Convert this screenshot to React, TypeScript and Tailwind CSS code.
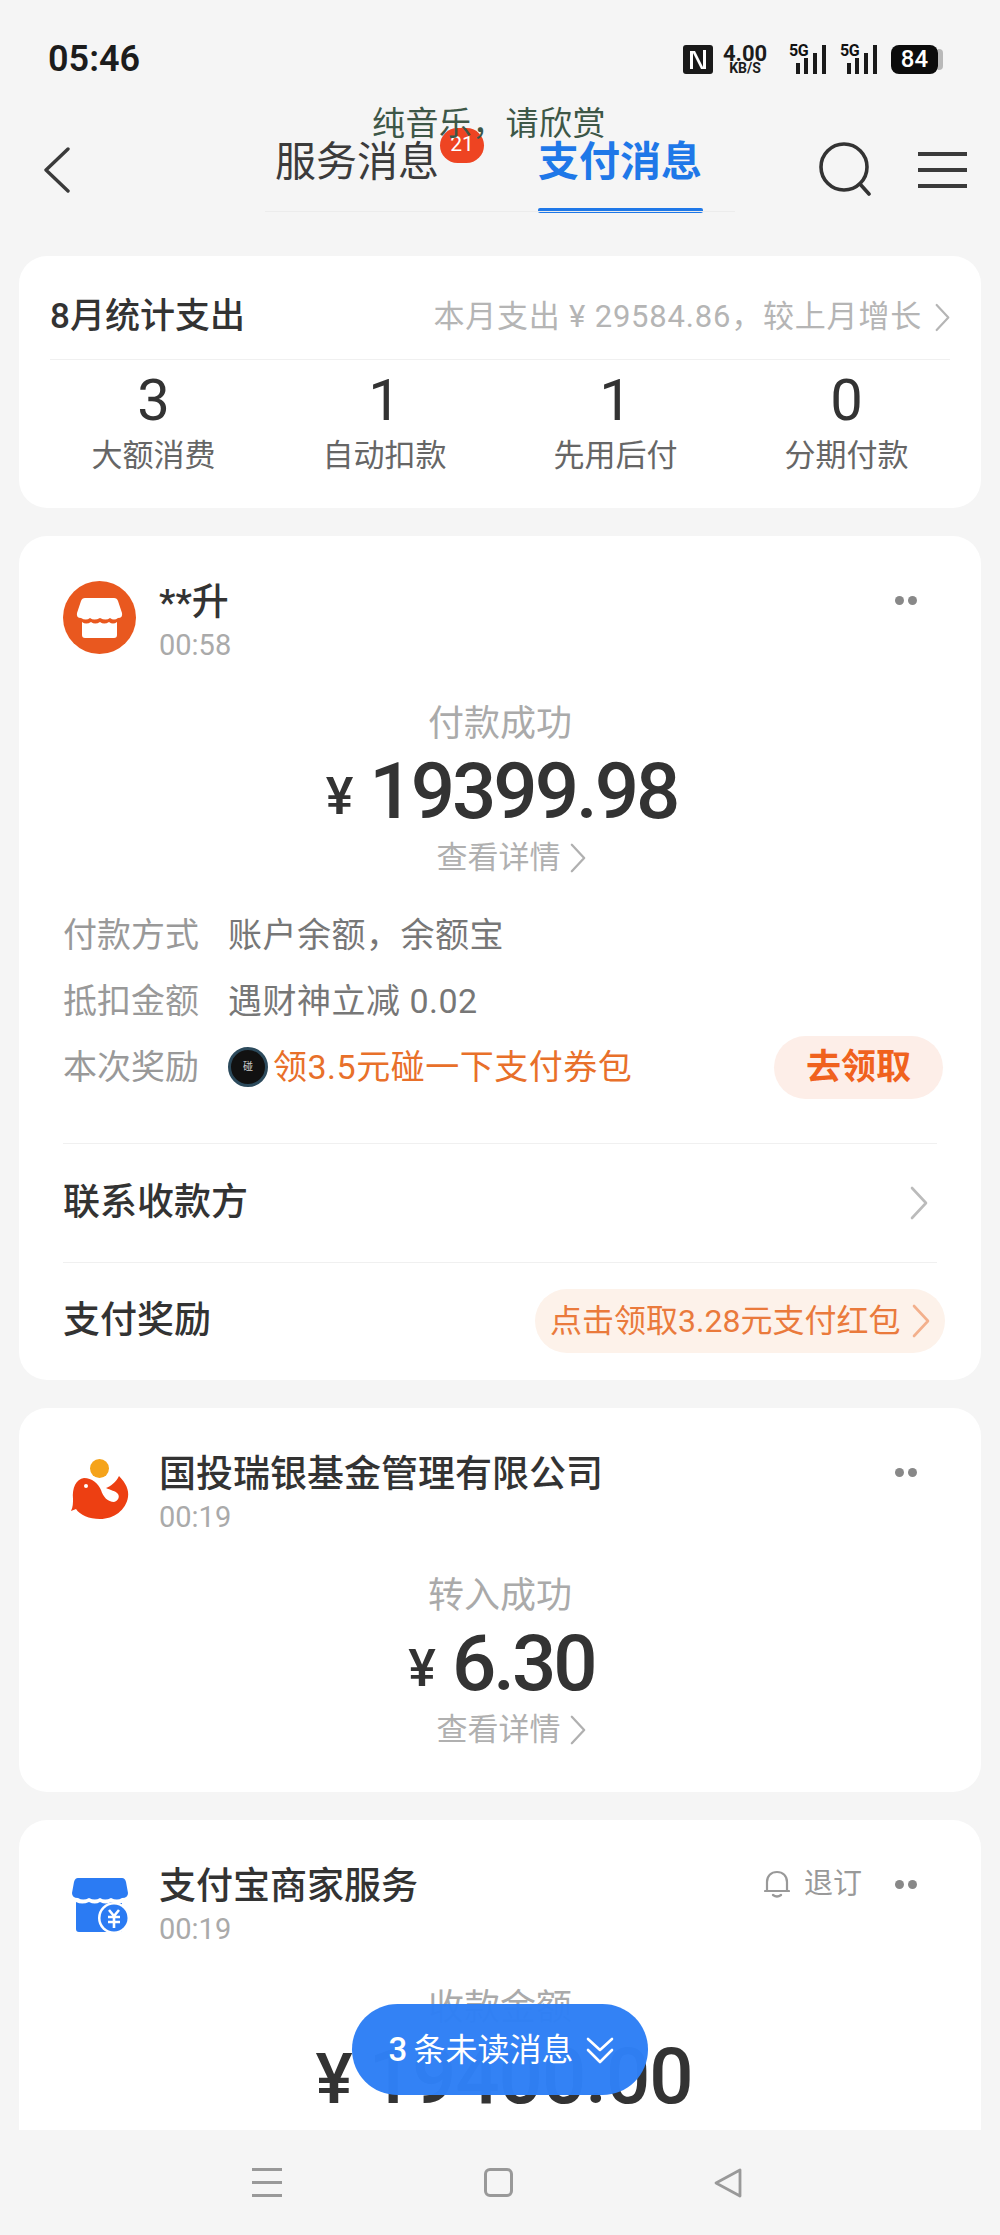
import React from 'react';

function Chevron({ className }: { className: string }) {
  return (
    <svg viewBox="0 0 18 34" fill="none" stroke="currentColor" strokeWidth="2.6" strokeLinecap="round" strokeLinejoin="round" className={className}>
      <path d="M2 2 L16 17 L2 32" />
    </svg>
  );
}

function Signal() {
  return (
    <div className="relative w-[38px] h-[29px]">
      <span className="absolute left-0 top-[-3px] text-[16px] leading-[18px] font-bold tracking-[-0.5px] text-[#111]">5G</span>
      <svg viewBox="0 0 38 29" className="absolute inset-0 w-[38px] h-[29px]" fill="#1a1a1a">
        <rect x="7" y="18" width="4" height="11" />
        <rect x="15" y="13" width="4" height="16" />
        <rect x="24" y="8" width="4" height="21" />
        <rect x="33" y="0" width="4" height="29" />
      </svg>
    </div>
  );
}

function StatusBar() {
  return (
    <div className="h-[100px] shrink-0 flex items-start justify-between pt-[41px] pl-[48px] pr-[57px]">
      <span className="text-[36px] leading-[36px] font-semibold text-[#1c1c1c]">05:46</span>
      <div className="mt-[4px] flex items-center">
        <svg viewBox="0 0 30 29" className="w-[30px] h-[29px]">
          <rect width="30" height="29" rx="3" fill="#1a1a1a" />
          <path d="M7 24 V6 H12 L20 22 V5 H23 V24 H18 L10 8 V24 Z" fill="#fff" />
        </svg>
        <div className="ml-[8px] w-[48px] flex flex-col items-center text-[#1c1c1c] font-bold">
          <span className="text-[22px] leading-[18px]">4.00</span>
          <span className="text-[14px] leading-[11px]">KB/S</span>
        </div>
        <div className="ml-[20px]"><Signal /></div>
        <div className="ml-[13px]"><Signal /></div>
        <div className="ml-[13px] w-[47px] h-[29px] rounded-[8px] bg-[#0c0c0c] text-white text-[24px] leading-[29px] font-medium text-center">84</div>
        <div className="w-[5px] h-[21px] rounded-r-[4px] bg-[#b9b9b9]" />
      </div>
    </div>
  );
}

function Header() {
  return (
    <div className="h-[130px] shrink-0 flex items-start relative">
      <svg viewBox="0 0 28 46" fill="none" stroke="#3a3a3a" strokeWidth="3.4" strokeLinecap="round" strokeLinejoin="round" className="w-[28px] h-[46px] ml-[43px] mt-[47px]">
        <path d="M25 2 L3 23 L25 44" />
      </svg>
      <div className="relative ml-[194px] mt-[36px] w-[470px] h-[78px] flex items-start">
        <div className="ml-[10px] w-[164px] text-[41px] leading-[52px] text-[#3b3b3b]">服务消息</div>
        <div className="ml-[99px] w-[165px] flex flex-col">
          <span className="text-[41px] leading-[52px] font-bold text-[#1f78e8]">支付消息</span>
          <span className="mt-[20px] h-[5px] rounded-[2px] bg-[#1f78e8]" />
        </div>
        <div className="absolute left-0 right-0 top-[75px] h-px bg-[#ececec]" />
      </div>
      <svg viewBox="0 0 54 54" fill="none" stroke="#333" strokeWidth="3.6" strokeLinecap="round" className="w-[54px] h-[54px] ml-[84px] mt-[42px]">
        <circle cx="25" cy="25" r="23" />
        <path d="M41 42 L50 52" />
      </svg>
      <div className="ml-[45px] mt-[52px] w-[49px] flex flex-col gap-[12px]">
        <span className="h-[4px] bg-[#3a3a3a]" />
        <span className="h-[4px] bg-[#3a3a3a]" />
        <span className="h-[4px] bg-[#3a3a3a]" />
      </div>
      {/* badge and the floating lyric sit over the tabs */}
      <div className="absolute left-[440px] top-[28px] w-[44px] h-[35px] rounded-full bg-[#ee4422] text-white text-[21px] leading-[33px] text-center">21</div>
      <div className="absolute left-[372px] top-[5px] text-[33px] leading-[38px] tracking-[0.4px] text-[#3d5747] whitespace-nowrap">纯音乐，请欣赏</div>
    </div>
  );
}

function StatCell({ n, label }: { n: string; label: string }) {
  return (
    <div className="flex flex-col items-center">
      <span className="text-[58px] leading-[62px] text-[#333]">{n}</span>
      <span className="mt-[5px] text-[31px] leading-[40px] text-[#666]">{label}</span>
    </div>
  );
}

function StatsCard() {
  return (
    <div className="h-[252px] shrink-0 rounded-[28px] bg-white px-[19px]">
      <div className="mx-[12px] h-[104px] pt-[20px] flex items-center justify-between border-b border-[#f0f0f0]">
        <span className="text-[35px] font-medium text-[#333]">8月统计支出</span>
        <div className="flex items-center text-[#b5b5b5]">
          <span className="text-[31px] tracking-[0.8px]">本月支出 ¥ 29584.86，较上月增长</span>
          <Chevron className="ml-[13px] w-[15px] h-[29px]" />
        </div>
      </div>
      <div className="grid grid-cols-4 pt-[9px]">
        <StatCell n="3" label="大额消费" />
        <StatCell n="1" label="自动扣款" />
        <StatCell n="1" label="先用后付" />
        <StatCell n="0" label="分期付款" />
      </div>
    </div>
  );
}

function Dots() {
  return (
    <div className="flex gap-[4px]">
      <span className="w-[9px] h-[9px] rounded-full bg-[#888]" />
      <span className="w-[9px] h-[9px] rounded-full bg-[#888]" />
    </div>
  );
}

function CardHead({ logo, title, time, extra }: { logo: React.ReactNode; title: string; time: string; extra?: React.ReactNode }) {
  return (
    <div className="flex items-start pl-[44px] pr-[64px] pt-[45px]">
      <div className="w-[73px] h-[73px] flex items-center justify-center shrink-0">{logo}</div>
      <div className="ml-[23px]">
        <div className="text-[37px] leading-[44px] font-medium text-[#333]">{title}</div>
        <div className="mt-[5px] text-[29px] leading-[30px] text-[#aaa]">{time}</div>
      </div>
      <div className="ml-auto h-[38px] flex items-center gap-[33px]">
        {extra}
        <Dots />
      </div>
    </div>
  );
}

function Amount({ value, status }: { value: string; status: string }) {
  return (
    <div className="flex flex-col items-center mt-[41px]">
      <span className="text-[36px] leading-[46px] text-[#aaa]">{status}</span>
      <div className="pl-[3px] flex items-baseline h-[90px]">
        <span className="-translate-y-[4px] text-[52px] leading-[90px] font-medium text-[#333]">¥</span>
        <span className="ml-[16px] text-[78px] leading-[90px] font-medium tracking-[-3px] text-[#333]">{value}</span>
      </div>
      <div className="mt-[1px] pl-[22px] flex items-center text-[#b0b0b0]">
        <span className="text-[31px] leading-[40px]">查看详情</span>
        <Chevron className="ml-[9px] w-[16px] h-[30px]" />
      </div>
    </div>
  );
}

function DetailRow({ label, children }: { label: string; children: React.ReactNode }) {
  return (
    <div className="flex items-center h-[66px] pl-[44px] pr-[38px]">
      <span className="w-[165px] text-[34px] text-[#999] shrink-0">{label}</span>
      {children}
    </div>
  );
}

function StoreLogo() {
  return (
    <svg viewBox="0 0 73 73" className="w-[73px] h-[73px]">
      <circle cx="36.5" cy="36.5" r="36.5" fill="#e9581f" />
      <path d="M22 17 H51 Q54 17 55 20 L59 32 Q60 37 55 37 Q51 40 47 37 Q43 40 37 37 Q31 40 27 37 Q23 40 18 37 Q13 37 14 32 L18 20 Q19 17 22 17 Z" fill="#fff" />
      <path d="M19 41 Q23 44 28 41 Q32 44 37 41 Q41 44 46 41 Q50 44 54 41 V54 Q54 57 51 57 H22 Q19 57 19 54 Z" fill="#fff" />
    </svg>
  );
}

function WhaleLogo() {
  return (
    <svg viewBox="0 0 60 62" className="w-[60px] h-[62px]">
      <circle cx="29.5" cy="9.5" r="9.5" fill="#f5a31a" />
      <path d="M14 19 C22 19 28 24 31 31 C33 38 38 43 44 43 C48 42 50 38 48 35 C46 32 40 31 36 29 C41 27 46 23 49 17 C56 24 59 31 58 38 C56 51 44 60 30 60 C19 60 10 56 6 50 L1 52 C3 48 3 44 3 40 C2 29 6 20 14 19 Z" fill="#ed3f12" />
      <circle cx="16" cy="27" r="2" fill="#fff" />
    </svg>
  );
}

function BlueStoreLogo() {
  return (
    <svg viewBox="0 0 56 56" className="mt-[9px] w-[56px] h-[56px]">
      <path d="M6 0 H50 Q53 0 54 4 L56 15 Q56 20 50 20 Q45 23 39 20 Q33 23 28 20 Q23 23 17 20 Q11 23 6 20 Q0 20 0 15 L2 4 Q3 0 6 0 Z" fill="#2b7bf3" />
      <path d="M4 24 Q10 27 17 24 Q23 27 28 24 Q34 27 39 24 Q44 26 50 25 V54 H7 Q4 54 4 51 Z" fill="#2b7bf3" />
      <circle cx="42" cy="40" r="16" fill="#fff" />
      <circle cx="42" cy="40" r="13.5" fill="#2b7bf3" />
      <path d="M37 32 L42 38 L47 32 M36 39 H48 M36 44 H48 M42 38 V50" fill="none" stroke="#fff" strokeWidth="2.6" />
    </svg>
  );
}

function PaymentCard() {
  return (
    <div className="h-[844px] shrink-0 rounded-[28px] bg-white">
      <CardHead logo={<StoreLogo />} title="**升" time="00:58" />
      <Amount value="19399.98" status="付款成功" />
      <div className="mt-[24px]">
        <DetailRow label="付款方式"><span className="text-[34px] tracking-[0.5px] text-[#777]">账户余额，余额宝</span></DetailRow>
        <DetailRow label="抵扣金额"><span className="text-[34px] tracking-[0.5px] text-[#777]">遇财神立减 0.02</span></DetailRow>
        <DetailRow label="本次奖励">
          <span className="w-[40px] h-[40px] rounded-full bg-[#111] border-[3px] border-[#2c4a5c] text-[10px] leading-[34px] text-center text-[#ccc] shrink-0">碰</span>
          <span className="ml-[5px] text-[34px] tracking-[0.5px] text-[#e8702a] whitespace-nowrap">领3.5元碰一下支付券包</span>
          <span className="ml-auto w-[169px] h-[63px] rounded-full bg-[#fdeee8] text-[35px] leading-[63px] font-bold text-center text-[#f0621e] shrink-0">去领取</span>
        </DetailRow>
      </div>
      <div className="mx-[44px] mt-[43px] border-t border-[#f0f0f0] h-[119px] flex items-center justify-between pr-[9px]">
        <span className="text-[37px] font-medium text-[#333]">联系收款方</span>
        <Chevron className="w-[18px] h-[34px] text-[#bbb]" />
      </div>
      <div className="mx-[44px] border-t border-[#f0f0f0] h-[117px] flex items-center justify-between">
        <span className="text-[37px] font-medium text-[#333]">支付奖励</span>
        <div className="w-[410px] h-[64px] -mr-[8px] rounded-full bg-[#fdf2ea] pl-[15px] flex items-center">
          <span className="text-[32px] text-[#ea7a3c] whitespace-nowrap">点击领取3.28元支付红包</span>
          <Chevron className="ml-[12px] w-[18px] h-[34px] text-[#f3b08c]" />
        </div>
      </div>
    </div>
  );
}

function FundCard() {
  return (
    <div className="h-[384px] shrink-0 rounded-[28px] bg-white">
      <CardHead logo={<WhaleLogo />} title="国投瑞银基金管理有限公司" time="00:19" />
      <Amount value="6.30" status="转入成功" />
    </div>
  );
}

function MerchantCard() {
  return (
    <div className="h-[420px] shrink-0 rounded-t-[28px] bg-white">
      <CardHead
        logo={<BlueStoreLogo />}
        title="支付宝商家服务"
        time="00:19"
        extra={
          <div className="flex items-center text-[#999]">
            <svg viewBox="0 0 26 28" fill="none" stroke="currentColor" strokeWidth="2.2" strokeLinejoin="round" strokeLinecap="round" className="w-[26px] h-[28px]">
              <path d="M3 21 V12 C3 6 7 2 13 2 C19 2 23 6 23 12 V21 Z M1 21 H25 M9 25 Q13 28 17 25" />
            </svg>
            <span className="ml-[14px] text-[29px] leading-[38px]">退订</span>
          </div>
        }
      />
      <div className="flex flex-col items-center mt-[41px]">
        <span className="text-[36px] leading-[46px] text-[#aaa]">收款金额</span>
        <div className="mt-[1px] pl-[8px] flex items-baseline">
          <span className="text-[70px] leading-[90px] font-medium text-[#333]">¥</span>
          <span className="ml-[16px] text-[78px] leading-[90px] font-medium tracking-[-1px] text-[#333]">19400.00</span>
        </div>
      </div>
    </div>
  );
}

function NavBar() {
  return (
    <div className="h-[105px] shrink-0 flex items-start pt-[38px] pl-[252px]">
      <div className="w-[30px] h-[29px] flex flex-col justify-between">
        <span className="h-[3px] bg-[#999]" />
        <span className="h-[3px] bg-[#999]" />
        <span className="h-[3px] bg-[#999]" />
      </div>
      <div className="ml-[202px] w-[29px] h-[29px] rounded-[6px] border-[3px] border-[#999]" />
      <svg viewBox="0 0 28 30" fill="none" stroke="#999" strokeWidth="2.8" strokeLinejoin="round" className="ml-[201px] w-[28px] h-[30px]">
        <path d="M26 2 V28 L2 15 Z" />
      </svg>
    </div>
  );
}

export default function App() {
  return (
    <div className="w-[1000px] h-[2235px] flex flex-col overflow-hidden bg-[#f5f5f5] font-['Roboto','Noto_Sans_CJK_SC',sans-serif]">
      <StatusBar />
      <Header />
      <main className="relative flex-1 overflow-hidden px-[19px] pt-[26px] flex flex-col gap-[28px]">
        <StatsCard />
        <PaymentCard />
        <FundCard />
        <MerchantCard />
        <div className="absolute left-[352px] top-[1774px] w-[296px] h-[91px] pl-[4px] rounded-full bg-[#2f80f5]/[0.98] flex items-center justify-center text-white">
          <span className="text-[33px] font-medium">3</span>
          <span className="ml-[6px] text-[32px]">条未读消息</span>
          <svg viewBox="0 0 30 30" fill="none" stroke="#fff" strokeWidth="2.6" strokeLinecap="round" strokeLinejoin="round" className="ml-[12px] w-[30px] h-[30px]">
            <path d="M3 4 L15 15 L27 4 M3 15 L15 27 L27 15" />
          </svg>
        </div>
      </main>
      <NavBar />
    </div>
  );
}
